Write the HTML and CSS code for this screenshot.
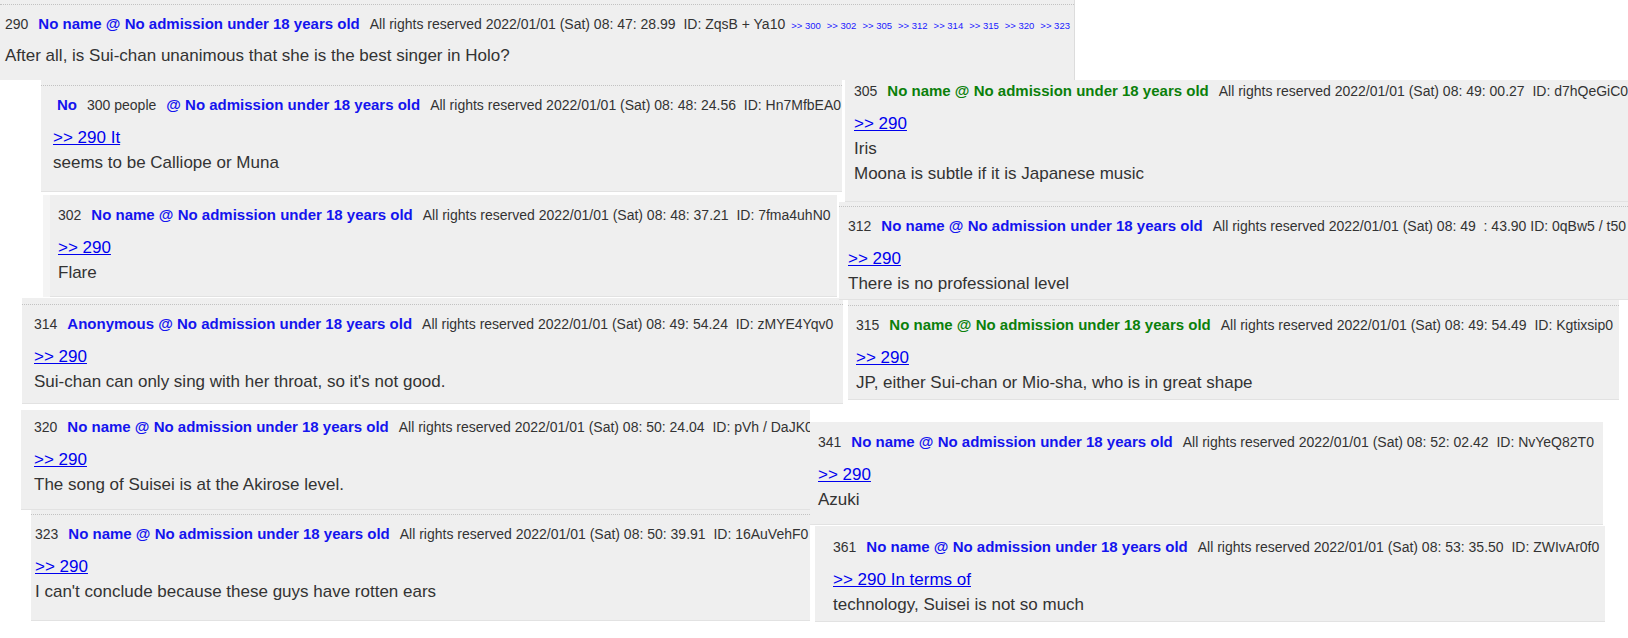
FILE: index.html
```html
<!DOCTYPE html>
<html lang="en">
<head>
    <meta charset="UTF-8">
    <meta name="viewport" content="width=device-width, initial-scale=1.0">
    <title>Thread 290 - replies</title>
    <link rel="stylesheet" href="styles.css">
</head>
<body>
    <main class="collage">
        <article class="post p290">
            <div class="post-inner">
                <div class="post-head">
                    <span class="num">290</span>
                    <span class="name">No name @ No admission under 18 years old</span>
                    <span class="meta">All rights reserved 2022/01/01 (Sat) 08: 47: 28.99  ID: ZqsB + Ya10</span>
                    <span class="replies">
                        <a href="#">&gt;&gt; 300</a>
                        <a href="#">&gt;&gt; 302</a>
                        <a href="#">&gt;&gt; 305</a>
                        <a href="#">&gt;&gt; 312</a>
                        <a href="#">&gt;&gt; 314</a>
                        <a href="#">&gt;&gt; 315</a>
                        <a href="#">&gt;&gt; 320</a>
                        <a href="#">&gt;&gt; 323</a>
                    </span>
                </div>
                <div class="post-body">After all, is Sui-chan unanimous that she is the best singer in Holo?</div>
            </div>
        </article>

        <div class="cols">
            <div class="col col-left">
                <article class="post p300">
                    <div class="post-inner">
                        <div class="post-head">
                            <span class="name">No</span>
                            <span class="num">300 people</span>
                            <span class="name">@ No admission under 18 years old</span>
                            <span class="meta">All rights reserved 2022/01/01 (Sat) 08: 48: 24.56  ID: Hn7MfbEA0</span>
                        </div>
                        <div class="post-body">
                            <a href="#">&gt;&gt; 290 It</a><br>
                            seems to be Calliope or Muna
                        </div>
                    </div>
                </article>
                <article class="post p302">
                    <div class="post-inner">
                        <div class="post-head">
                            <span class="num">302</span>
                            <span class="name">No name @ No admission under 18 years old</span>
                            <span class="meta">All rights reserved 2022/01/01 (Sat) 08: 48: 37.21  ID: 7fma4uhN0</span>
                        </div>
                        <div class="post-body">
                            <a href="#">&gt;&gt; 290</a><br>
                            Flare
                        </div>
                    </div>
                </article>
                <article class="post p314">
                    <div class="post-inner">
                        <div class="post-head">
                            <span class="num">314</span>
                            <span class="name">Anonymous @ No admission under 18 years old</span>
                            <span class="meta">All rights reserved 2022/01/01 (Sat) 08: 49: 54.24  ID: zMYE4Yqv0</span>
                        </div>
                        <div class="post-body">
                            <a href="#">&gt;&gt; 290</a><br>
                            Sui-chan can only sing with her throat, so it's not good.
                        </div>
                    </div>
                </article>
                <article class="post p320">
                    <div class="post-inner">
                        <div class="post-head">
                            <span class="num">320</span>
                            <span class="name">No name @ No admission under 18 years old</span>
                            <span class="meta">All rights reserved 2022/01/01 (Sat) 08: 50: 24.04  ID: pVh / DaJK0</span>
                        </div>
                        <div class="post-body">
                            <a href="#">&gt;&gt; 290</a><br>
                            The song of Suisei is at the Akirose level.
                        </div>
                    </div>
                </article>
                <article class="post p323">
                    <div class="post-inner">
                        <div class="post-head">
                            <span class="num">323</span>
                            <span class="name">No name @ No admission under 18 years old</span>
                            <span class="meta">All rights reserved 2022/01/01 (Sat) 08: 50: 39.91  ID: 16AuVehF0</span>
                        </div>
                        <div class="post-body">
                            <a href="#">&gt;&gt; 290</a><br>
                            I can't conclude because these guys have rotten ears
                        </div>
                    </div>
                </article>
            </div>

            <div class="col col-right">
                <article class="post p305">
                    <div class="post-inner">
                        <div class="post-head">
                            <span class="num">305</span>
                            <span class="name green">No name @ No admission under 18 years old</span>
                            <span class="meta">All rights reserved 2022/01/01 (Sat) 08: 49: 00.27  ID: d7hQeGiC0</span>
                        </div>
                        <div class="post-body">
                            <a href="#">&gt;&gt; 290</a><br>
                            Iris<br>
                            Moona is subtle if it is Japanese music
                        </div>
                    </div>
                </article>
                <article class="post p312">
                    <div class="post-inner">
                        <div class="post-head">
                            <span class="num">312</span>
                            <span class="name">No name @ No admission under 18 years old</span>
                            <span class="meta">All rights reserved 2022/01/01 (Sat) 08: 49  : 43.90 ID: 0qBw5 / t50</span>
                        </div>
                        <div class="post-body">
                            <a href="#">&gt;&gt; 290</a><br>
                            There is no professional level
                        </div>
                    </div>
                </article>
                <article class="post p315">
                    <div class="post-inner">
                        <div class="post-head">
                            <span class="num">315</span>
                            <span class="name green">No name @ No admission under 18 years old</span>
                            <span class="meta">All rights reserved 2022/01/01 (Sat) 08: 49: 54.49  ID: Kgtixsip0</span>
                        </div>
                        <div class="post-body">
                            <a href="#">&gt;&gt; 290</a><br>
                            JP, either Sui-chan or Mio-sha, who is in great shape
                        </div>
                    </div>
                </article>
                <article class="post p341">
                    <div class="post-inner">
                        <div class="post-head">
                            <span class="num">341</span>
                            <span class="name">No name @ No admission under 18 years old</span>
                            <span class="meta">All rights reserved 2022/01/01 (Sat) 08: 52: 02.42  ID: NvYeQ82T0</span>
                        </div>
                        <div class="post-body">
                            <a href="#">&gt;&gt; 290</a><br>
                            Azuki
                        </div>
                    </div>
                </article>
                <article class="post p361">
                    <div class="post-inner">
                        <div class="post-head">
                            <span class="num">361</span>
                            <span class="name">No name @ No admission under 18 years old</span>
                            <span class="meta">All rights reserved 2022/01/01 (Sat) 08: 53: 35.50  ID: ZWIvAr0f0</span>
                        </div>
                        <div class="post-body">
                            <a href="#">&gt;&gt; 290 In terms of</a><br>
                            technology, Suisei is not so much
                        </div>
                    </div>
                </article>
            </div>
        </div>
    </main>
</body>
</html>
```

FILE: styles.css
```css
body {
    margin: 0;
    font-family: "Liberation Sans", Arial, sans-serif;
    background-color: #fff;
    color: #333;
}
.collage {
    width: 1628px;
    height: 638px;
    overflow: hidden;
}
.cols {
    display: flex;
}
.col {
    flex: none;
    display: flex;
    flex-direction: column;
    align-items: flex-start;
}
.col-left {
    width: 810px;
}
.col-right {
    width: 818px;
}
.post {
    box-sizing: border-box;
    flex: none;
    background-color: #efefef;
    overflow: hidden;
    white-space: nowrap;
    padding-top: 4px;
    box-shadow: inset 0 -1px 0 #e2e2e2;
}
.post-inner {
    border-top: 1px dotted #c2c2c2;
    padding-top: 9px;
}
.post-head {
    display: flex;
    align-items: baseline;
    gap: 10px;
    height: 20px;
    line-height: 20px;
    font-size: 14px;
    color: #333;
}
.name {
    font-size: 15px;
    font-weight: bold;
    color: #1414ee;
}
.name.green {
    color: #0b800b;
}
.meta {
    white-space: pre;
}
.replies {
    display: flex;
    gap: 6px;
    margin-left: -4px;
    font-size: 9.5px;
}
.replies a {
    color: #2020ff;
    text-decoration: none;
}
.post-body {
    margin-top: 10px;
    font-size: 17px;
    line-height: 25px;
}
.post-body a {
    color: #0000ee;
    text-decoration: underline;
}

.p290 {
    width: 1075px;
    height: 80px;
    border-right: 1px solid #dcdcdc;
    box-shadow: none;
}
.p290 .post-inner {
    padding-left: 5px;
}
.p290 .post-body {
    margin-top: 9px;
}

.p300 {
    margin-left: 41px;
    width: 801px;
    height: 112px;
    padding-top: 5px;
}
.p300 .post-inner {
    padding-left: 12px;
}
.p300 .post-head {
    padding-left: 4px;
}
.p302 {
    margin-top: 3px;
    margin-left: 43px;
    width: 794px;
    height: 102px;
    padding-top: 0;
    border-left: 7px solid #f4f4f4;
}
.p302 .post-inner {
    border-top-color: transparent;
    padding-left: 8px;
}
.p314 {
    margin-top: 1px;
    margin-left: 22px;
    width: 821px;
    height: 106px;
    padding-top: 6px;
}
.p314 .post-inner {
    padding-left: 12px;
}
.p320 {
    margin-top: 6px;
    margin-left: 21px;
    width: 789px;
    height: 100px;
    padding-top: 0;
}
.p320 .post-inner {
    border-top-color: transparent;
    padding-top: 6px;
    padding-left: 13px;
}
.p323 {
    margin-left: 31px;
    width: 779px;
    height: 111px;
    padding-top: 4px;
}
.p323 .post-inner {
    padding-left: 4px;
}

.p305 {
    margin-left: 35px;
    width: 783px;
    height: 122px;
    padding-top: 0;
}
.p305 .post-inner {
    border-top: 0;
    padding-top: 1px;
    padding-left: 9px;
}
.p312 {
    margin-left: 29px;
    width: 789px;
    height: 98px;
    padding-top: 4px;
}
.p312 .post-inner {
    padding-left: 9px;
}
.p315 {
    margin-left: 38px;
    width: 771px;
    height: 100px;
    padding-top: 5px;
}
.p315 .post-inner {
    padding-left: 8px;
}
.p341 {
    margin-top: 22px;
    width: 793px;
    height: 103px;
    padding-top: 0;
}
.p341 .post-inner {
    border-top-color: transparent;
    padding-left: 8px;
}
.p361 {
    margin-top: 1px;
    margin-left: 5px;
    width: 790px;
    height: 96px;
    padding-top: 1px;
}
.p361 .post-inner {
    border-top-color: transparent;
    padding-left: 18px;
}
```
